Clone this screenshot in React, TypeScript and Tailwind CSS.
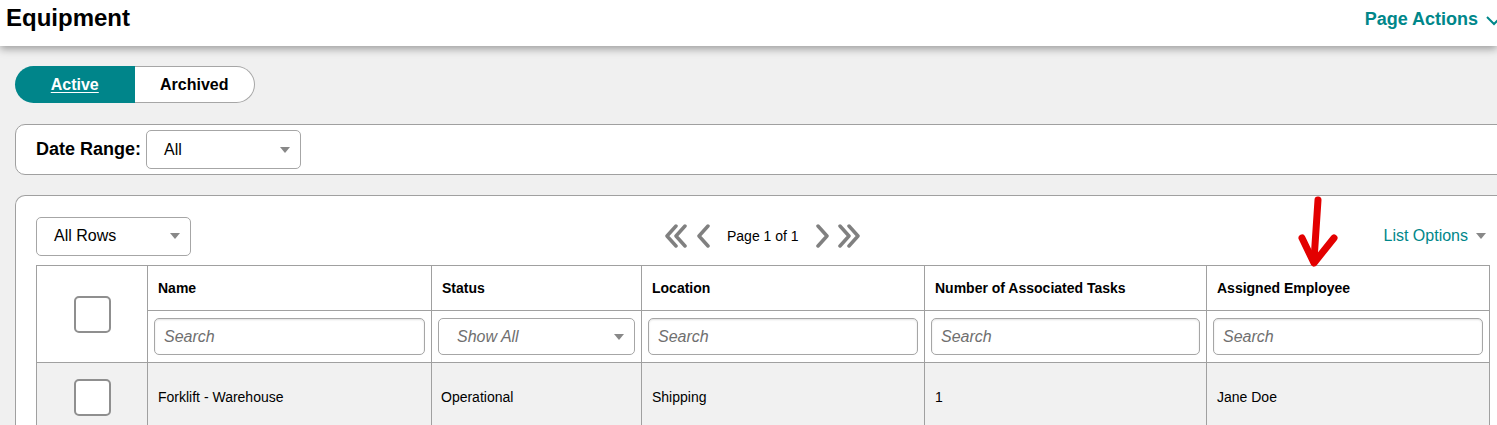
import * as React from "react";

const font = "font-['Liberation_Sans',Arial,sans-serif]";

function Caret({ className = "" }: { className?: string }) {
  return (
    <svg width="10" height="6" viewBox="0 0 10 6" className={className}>
      <path d="M0 0h10L5 6z" fill="#888" />
    </svg>
  );
}

function Chevrons({ dir, double }: { dir: "left" | "right"; double?: boolean }) {
  const one = dir === "left" ? "M13 2L4 12l9 10" : "M3 2l9 10-9 10";
  return (
    <svg
      width={double ? 26 : 16}
      height="24"
      viewBox={double ? "0 0 26 24" : "0 0 16 24"}
      fill="none"
      stroke="#808080"
      strokeWidth="3.5"
      strokeLinecap="round"
      strokeLinejoin="round"
    >
      <path d={one} />
      {double && <path d={one} transform="translate(9 0)" />}
    </svg>
  );
}

function Checkbox() {
  return <div className="mx-auto w-[37px] h-[37px] rounded-[5px] border-2 border-[#8f8f8f] bg-white" />;
}

function SearchInput() {
  return (
    <input
      placeholder="Search"
      className="w-full h-[37px] rounded-[5px] border border-[#a6a6a6] bg-white px-[9px] text-[16px] italic placeholder:text-[#6f6f6f] shadow-[inset_0_1px_2px_rgba(0,0,0,0.12)] outline-none"
    />
  );
}

function SelectBox({ label, className = "", italic }: { label: string; className?: string; italic?: boolean }) {
  return (
    <div
      className={`flex items-center justify-between rounded-[5px] border border-[#a6a6a6] bg-white pl-[17px] pr-[10px] text-[16px] ${italic ? "italic text-[#6f6f6f]" : "text-black"} ${className}`}
    >
      <span>{label}</span>
      <Caret />
    </div>
  );
}

const columns = [
  { title: "Name", width: "w-[284px]" },
  { title: "Status", width: "w-[210px]" },
  { title: "Location", width: "w-[283px]" },
  { title: "Number of Associated Tasks", width: "w-[282px]" },
  { title: "Assigned Employee", width: "w-[283px]" },
];

const rows = [
  { name: "Forklift - Warehouse", status: "Operational", location: "Shipping", tasks: "1", employee: "Jane Doe" },
];

export default function App() {
  return (
    <div className={`${font} relative w-[1497px] h-[425px] overflow-hidden bg-[#f0f0f0] text-black`}>
      <header className="relative z-10 flex h-[46px] items-start justify-between bg-white pl-[6px] shadow-[0_3px_8px_rgba(0,0,0,0.35)]">
        <h1 className="mt-[3px] text-[24px] font-bold leading-[30px]">Equipment</h1>
        <div className="mt-[6px] flex items-center gap-[8px] -mr-[5px]">
          <span className="text-[18px] font-bold text-[#00878a]">Page Actions</span>
          <svg width="16" height="12" viewBox="0 0 16 12" fill="none" stroke="#00878a" strokeWidth="2">
            <path d="M1 3l7 7 7-7" />
          </svg>
        </div>
      </header>

      <div className="pl-[15px] pt-[20px]">
        <div className="flex h-[37px] w-[240px] text-[16px] font-bold">
          <button className="flex-1 rounded-l-full bg-[#00858a] text-white underline underline-offset-2">Active</button>
          <button className="flex-1 rounded-r-full border border-l-0 border-[#a6a6a6] bg-white">Archived</button>
        </div>

        <div className="mt-[21px] flex h-[51px] w-[1500px] items-center gap-[5px] rounded-[10px] border border-[#a0a0a0] bg-white pl-[20px]">
          <span className="text-[18px] font-bold">Date Range:</span>
          <SelectBox label="All" className="h-[39px] w-[155px]" />
        </div>

        <div className="mt-[20px] w-[1500px] rounded-t-[10px] border border-b-0 border-[#a0a0a0] bg-white pl-[20px] pt-[20px]">
          <div className="flex h-[40px] w-[1454px] items-center">
            <SelectBox label="All Rows" className="h-[39px] w-[155px]" />
            <div className="ml-[472px] flex items-center">
              <Chevrons dir="left" double />
              <span className="ml-[6px]"><Chevrons dir="left" /></span>
              <span className="mx-[16px] text-[14px]">Page 1 of 1</span>
              <Chevrons dir="right" />
              <span className="ml-[6px]"><Chevrons dir="right" double /></span>
            </div>
            <div className="ml-auto mr-[4px] flex items-center gap-[8px]">
              <span className="text-[16px] text-[#00878a]">List Options</span>
              <Caret />
            </div>
          </div>

          <table className="mt-[9px] w-[1454px] table-fixed border-collapse text-[14px]">
            <thead>
              <tr className="h-[45px]">
                <th rowSpan={2} className="w-[111px] border border-[#a0a0a0] align-middle">
                  <Checkbox />
                </th>
                {columns.map((c) => (
                  <th key={c.title} className={`${c.width} border border-[#a0a0a0] px-[10px] text-left font-bold`}>
                    {c.title}
                  </th>
                ))}
              </tr>
              <tr className="h-[52px]">
                {columns.map((c) => (
                  <th key={c.title} className="border border-[#a0a0a0] px-[6px] font-normal">
                    {c.title === "Status" ? (
                      <SelectBox label="Show All" italic className="h-[37px] w-full pl-[18px]" />
                    ) : (
                      <SearchInput />
                    )}
                  </th>
                ))}
              </tr>
            </thead>
            <tbody>
              {rows.map((r) => (
                <tr key={r.name} className="h-[70px] bg-[#f1f1f1]">
                  <td className="border border-[#a0a0a0] align-middle">
                    <Checkbox />
                  </td>
                  <td className="border border-[#a0a0a0] px-[10px]">{r.name}</td>
                  <td className="border border-[#a0a0a0] px-[9px]">{r.status}</td>
                  <td className="border border-[#a0a0a0] px-[10px]">{r.location}</td>
                  <td className="border border-[#a0a0a0] px-[10px]">{r.tasks}</td>
                  <td className="border border-[#a0a0a0] px-[10px]">{r.employee}</td>
                </tr>
              ))}
            </tbody>
          </table>
        </div>
      </div>

      {/* annotation arrow over the Assigned Employee column */}
      <svg className="absolute left-[1290px] top-[194px]" width="50" height="76" viewBox="0 0 50 76" fill="none">
        <g stroke="#e30000" strokeWidth="7" strokeLinecap="round" strokeLinejoin="round">
          <path d="M28 6L24 66" />
          <path d="M12 44l12 25 20-25" />
        </g>
      </svg>
    </div>
  );
}
